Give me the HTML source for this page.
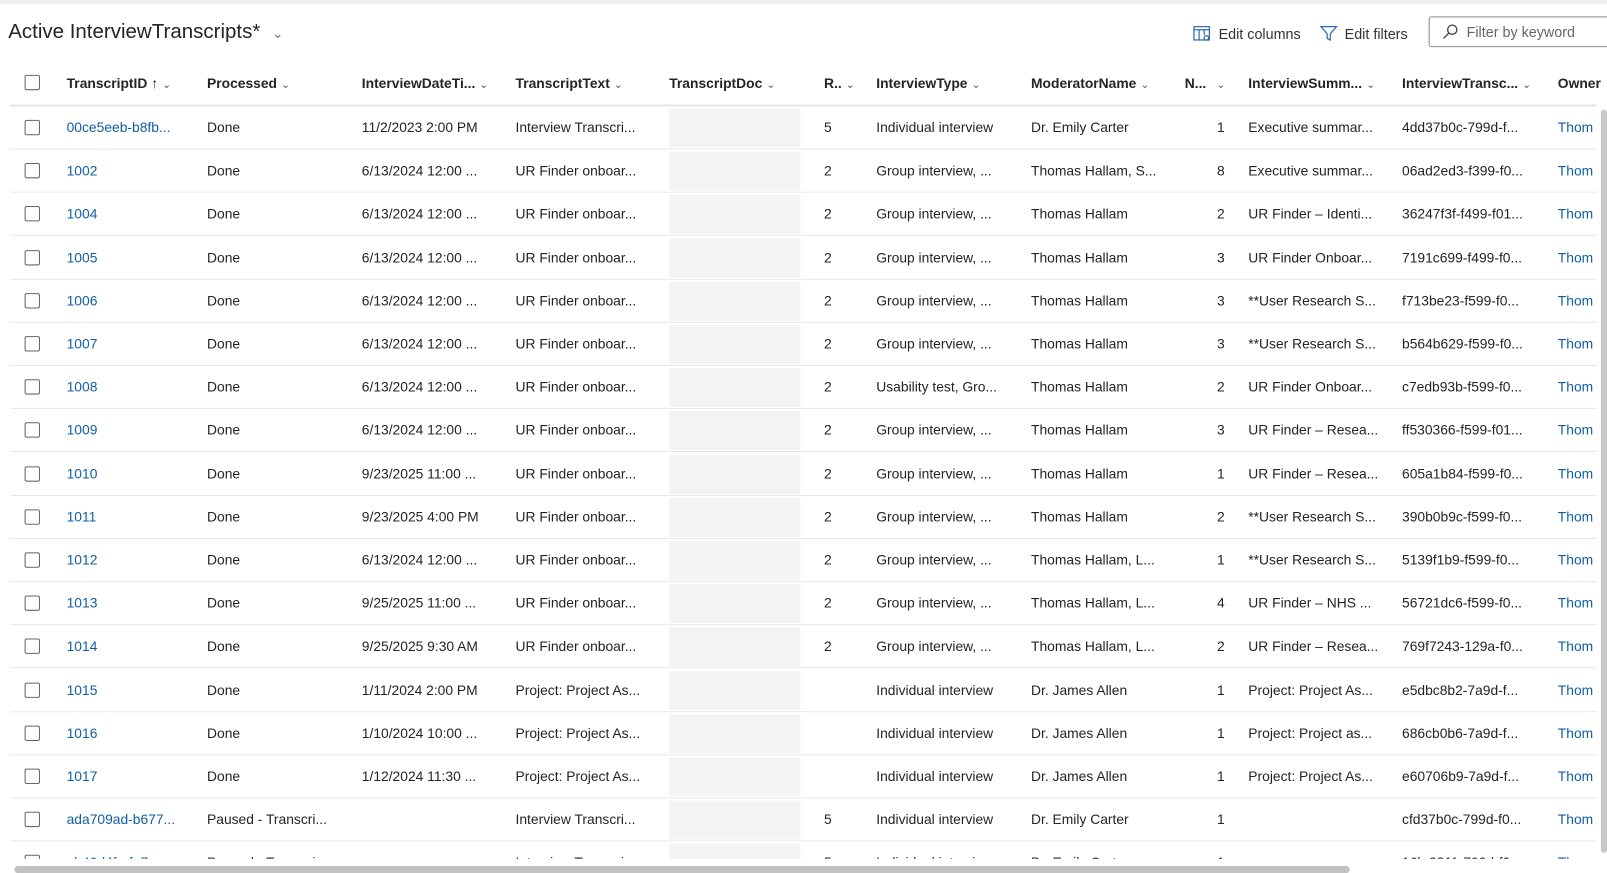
<!DOCTYPE html>
<html><head><style>
body{margin:0;width:1607px;height:872px;overflow:hidden;background:#fff;font-family:"Liberation Sans",sans-serif;font-size:13.5px;color:#242424;position:relative}
#w{position:absolute;left:0;top:0;width:1568px;height:851px;transform:scale(1.02487);transform-origin:0 0}
.topbar{position:absolute;left:0;top:0;width:1607px;height:4px;background:#f0f0f0}
.title{position:absolute;left:8px;top:20px;font-size:20px;color:#242424}
.title .cv{font-size:13px;color:#777;margin-left:6px}
.tb{position:absolute;top:25px;font-size:14px;color:#333}
.search{position:absolute;left:1394px;top:16px;width:220px;height:30px;border:1px solid #8a8a8a;border-radius:3px;box-sizing:border-box}
.search span{position:absolute;left:36px;top:6px;color:#666;font-size:14px}
.cb{position:absolute;left:24px;width:15px;height:15px;border:1px solid #666;border-radius:2px;box-sizing:border-box}
.c{position:absolute;white-space:nowrap}
.h{font-weight:bold;top:74px;color:#242424;font-size:13.5px}
.h i{font-style:normal;font-weight:normal;font-size:10px;margin-left:4px;color:#555}
.link{color:#115ea3}
.line{position:absolute;left:10px;width:1548px;height:1px;background:#e8e8e8}
.doc{position:absolute;left:653px;width:128px;height:38px;background:#f3f3f3}
.clip{position:absolute;left:0;top:103px;width:1607px;height:735px;overflow:hidden}
</style></head><body><div id="w">
<div class="topbar"></div>
<div class="title">Active InterviewTranscripts* <span class="cv">&#8964;</span></div>
<svg style="position:absolute;left:1164px;top:25px" width="18" height="16" viewBox="0 0 18 16" fill="none" stroke="#2b6cb0" stroke-width="1.2"><rect x="1" y="1" width="15" height="13"/><line x1="1" y1="4" x2="16" y2="4"/><line x1="6" y1="4" x2="6" y2="14"/><line x1="11" y1="4" x2="11" y2="9"/><circle cx="13" cy="12" r="2.2"/></svg>
<div class="tb" style="left:1189px">Edit columns</div>
<svg style="position:absolute;left:1288px;top:25px" width="17" height="16" viewBox="0 0 17 16" fill="none" stroke="#2b6cb0" stroke-width="1.2"><path d="M1 1h15l-6 7v6l-3-1.5V8z"/></svg>
<div class="tb" style="left:1312px">Edit filters</div>
<div class="search"><svg style="position:absolute;left:12px;top:6px" width="16" height="16" viewBox="0 0 16 16" fill="none" stroke="#444" stroke-width="1.3"><circle cx="10" cy="6" r="4.5"/><line x1="6.8" y1="9.2" x2="1.5" y2="14.5"/></svg><span>Filter by keyword</span></div>
<div class="cb" style="top:73px"></div>
<div class="c h" style="left:65px">TranscriptID <span style="font-weight:normal">&#8593;</span><i>&#8964;</i></div>
<div class="c h" style="left:202px">Processed<i>&#8964;</i></div>
<div class="c h" style="left:353px">InterviewDateTi...<i>&#8964;</i></div>
<div class="c h" style="left:503px">TranscriptText<i>&#8964;</i></div>
<div class="c h" style="left:653px">TranscriptDoc<i>&#8964;</i></div>
<div class="c h" style="left:804px">R..<i>&#8964;</i></div>
<div class="c h" style="left:855px">InterviewType<i>&#8964;</i></div>
<div class="c h" style="left:1006px">ModeratorName<i>&#8964;</i></div>
<div class="c h" style="left:1156px">N...<i style="margin-left:10px">&#8964;</i></div>
<div class="c h" style="left:1218px">InterviewSumm...<i>&#8964;</i></div>
<div class="c h" style="left:1368px">InterviewTransc...<i>&#8964;</i></div>
<div class="c h" style="left:1520px">Owner</div>
<div class="line" style="top:102px;height:2px;background:#e4e4e4"></div>
<div class="clip" id="rows"></div>
<div style="position:absolute;left:1562px;top:107px;width:6px;height:725px;background:#c8c8c8;border-radius:3px"></div>
<div style="position:absolute;left:14px;top:845px;width:1303px;height:7px;background:#c2c2c2;border-radius:4px"></div>
</div>
<script>
var d=[
["00ce5eeb-b8fb...","Done","11/2/2023 2:00 PM","Interview Transcri...","5","Individual interview","Dr. Emily Carter","1","Executive summar...","4dd37b0c-799d-f..."],
["1002","Done","6/13/2024 12:00 ...","UR Finder onboar...","2","Group interview, ...","Thomas Hallam, S...","8","Executive summar...","06ad2ed3-f399-f0..."],
["1004","Done","6/13/2024 12:00 ...","UR Finder onboar...","2","Group interview, ...","Thomas Hallam","2","UR Finder – Identi...","36247f3f-f499-f01..."],
["1005","Done","6/13/2024 12:00 ...","UR Finder onboar...","2","Group interview, ...","Thomas Hallam","3","UR Finder Onboar...","7191c699-f499-f0..."],
["1006","Done","6/13/2024 12:00 ...","UR Finder onboar...","2","Group interview, ...","Thomas Hallam","3","**User Research S...","f713be23-f599-f0..."],
["1007","Done","6/13/2024 12:00 ...","UR Finder onboar...","2","Group interview, ...","Thomas Hallam","3","**User Research S...","b564b629-f599-f0..."],
["1008","Done","6/13/2024 12:00 ...","UR Finder onboar...","2","Usability test, Gro...","Thomas Hallam","2","UR Finder Onboar...","c7edb93b-f599-f0..."],
["1009","Done","6/13/2024 12:00 ...","UR Finder onboar...","2","Group interview, ...","Thomas Hallam","3","UR Finder – Resea...","ff530366-f599-f01..."],
["1010","Done","9/23/2025 11:00 ...","UR Finder onboar...","2","Group interview, ...","Thomas Hallam","1","UR Finder – Resea...","605a1b84-f599-f0..."],
["1011","Done","9/23/2025 4:00 PM","UR Finder onboar...","2","Group interview, ...","Thomas Hallam","2","**User Research S...","390b0b9c-f599-f0..."],
["1012","Done","6/13/2024 12:00 ...","UR Finder onboar...","2","Group interview, ...","Thomas Hallam, L...","1","**User Research S...","5139f1b9-f599-f0..."],
["1013","Done","9/25/2025 11:00 ...","UR Finder onboar...","2","Group interview, ...","Thomas Hallam, L...","4","UR Finder – NHS ...","56721dc6-f599-f0..."],
["1014","Done","9/25/2025 9:30 AM","UR Finder onboar...","2","Group interview, ...","Thomas Hallam, L...","2","UR Finder – Resea...","769f7243-129a-f0..."],
["1015","Done","1/11/2024 2:00 PM","Project: Project As...","","Individual interview","Dr. James Allen","1","Project: Project As...","e5dbc8b2-7a9d-f..."],
["1016","Done","1/10/2024 10:00 ...","Project: Project As...","","Individual interview","Dr. James Allen","1","Project: Project as...","686cb0b6-7a9d-f..."],
["1017","Done","1/12/2024 11:30 ...","Project: Project As...","","Individual interview","Dr. James Allen","1","Project: Project As...","e60706b9-7a9d-f..."],
["ada709ad-b677...","Paused - Transcri...","","Interview Transcri...","5","Individual interview","Dr. Emily Carter","1","","cfd37b0c-799d-f0..."],
["ab40d4f-afe7...","Paused - Transcri...","","Interview Transcri...","5","Individual interview","Dr. Emily Carter","1","","16b.3311-799d-f0..."]];
var x=[65,202,353,503,804,855,1006,0,1218,1368],h="";
d.forEach(function(r,i){var t=i*42.2;
h+='<div class="doc" style="top:'+(t+3)+'px"></div>';
h+='<div class="cb" style="top:'+(t+14)+'px"></div>';
r.forEach(function(v,j){ if(j==7){h+='<div class="c" style="left:1160px;width:35px;text-align:right;top:'+(t+14)+'px">'+v+'</div>';return;}
h+='<div class="c'+(j==0?' link':'')+'" style="left:'+x[j]+'px;top:'+(t+14)+'px">'+v+'</div>';});
h+='<div class="c link" style="left:1520px;top:'+(t+14)+'px">Thom</div>';
h+='<div class="line" style="top:'+(t+42)+'px"></div>';});
document.getElementById('rows').innerHTML=h;
</script>
</body></html>
